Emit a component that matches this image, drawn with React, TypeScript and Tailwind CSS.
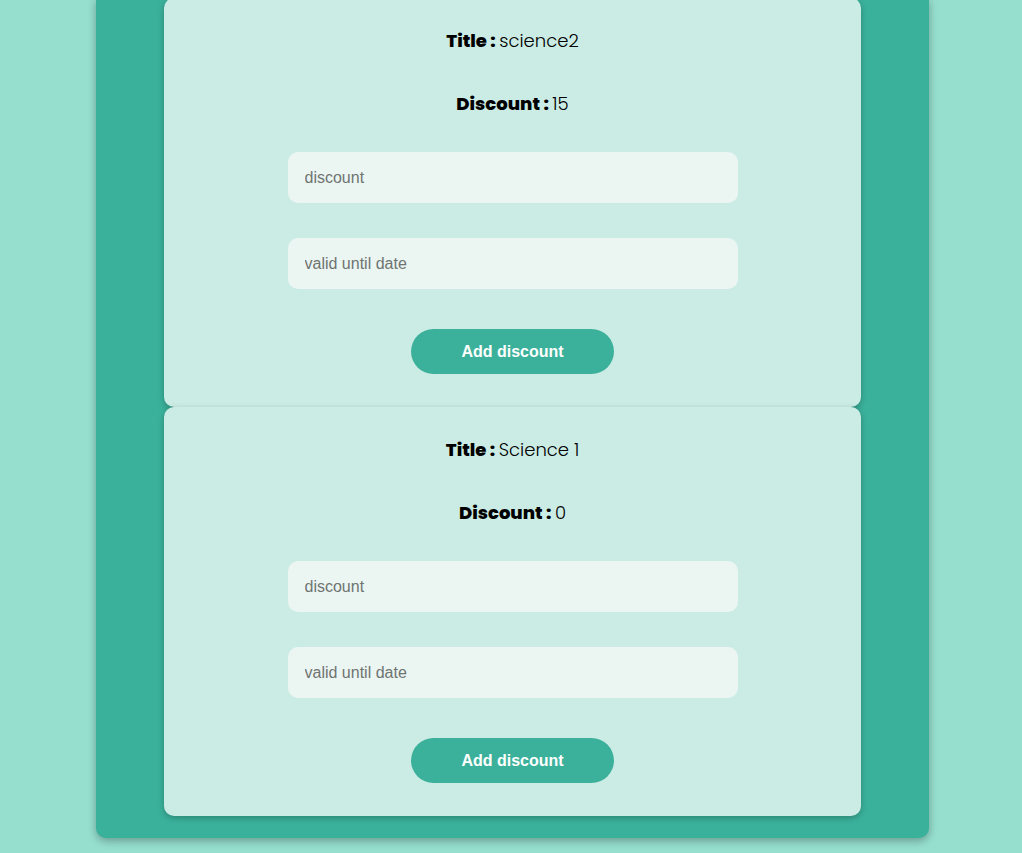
const offers = [
  { title: "science2", discount: 15 },
  { title: "Science 1", discount: 0 },
];

function OfferCard({ title, discount }: { title: string; discount: number }) {
  return (
    <div className="bg-[#cbece5] rounded-[10px] shadow-[0_2px_6px_rgba(0,0,0,0.25)] flex flex-col items-center pt-[29px] pb-[33px]">
      <p className="text-[18px] leading-[27px] text-black">
        <span className="font-extrabold">Title : </span>
        <span className="font-light">{title}</span>
      </p>
      <p className="text-[18px] leading-[27px] text-black mt-[36px]">
        <span className="font-extrabold">Discount : </span>
        <span className="font-light">{discount}</span>
      </p>
      <input
        placeholder="discount"
        className="mt-[35px] w-[450px] h-[51px] rounded-[10px] bg-[#ebf5f1] px-[17px] text-[16px] font-['Liberation_Sans',Arial,sans-serif] placeholder:text-[#6f7471] outline-none"
      />
      <input
        placeholder="valid until date"
        className="mt-[35px] w-[450px] h-[51px] rounded-[10px] bg-[#ebf5f1] px-[17px] text-[16px] font-['Liberation_Sans',Arial,sans-serif] placeholder:text-[#6f7471] outline-none"
      />
      <button className="mt-[40px] w-[203px] h-[45px] rounded-full bg-[#3bb19b] text-white font-bold text-[16px] font-['Liberation_Sans',Arial,sans-serif]">
        Add discount
      </button>
    </div>
  );
}

export default function App() {
  return (
    <div className="min-h-[853px] bg-[#96dfcf] font-['Poppins',Inter,sans-serif] overflow-hidden">
      <div className="ml-[96px] w-[833px] -mt-[2px] bg-[#3ab19b] rounded-b-[10px] shadow-[0_3px_8px_rgba(0,0,0,0.3)] px-[68px] pb-[22px] flex flex-col">
        {offers.map((o) => (
          <OfferCard key={o.title} title={o.title} discount={o.discount} />
        ))}
      </div>
    </div>
  );
}
